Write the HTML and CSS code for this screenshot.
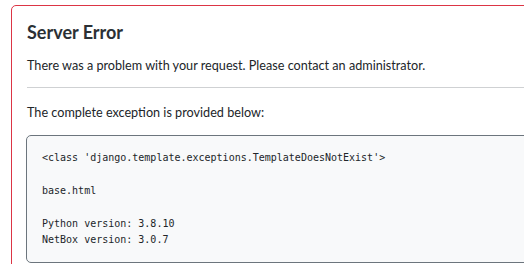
FILE: index.html
```html
<!DOCTYPE html>
<html>
<head>
<meta charset="utf-8">
<title>Server Error</title>
<link rel="stylesheet" href="styles.css">
</head>

<body>
	<div class="card">
		<h1 class="title">Server Error</h1>
		<p class="lead">There was a problem with your request. Please contact an administrator.</p>
		<hr class="rule">
		<p class="lead">The complete exception is provided below:</p>
		<pre class="trace">&lt;class 'django.template.exceptions.TemplateDoesNotExist'&gt;

base.html

Python version: 3.8.10
NetBox version: 3.0.7</pre>
	</div>
</body>
</html>
```

FILE: styles.css
```css
	html {
		overflow: hidden;
	}
	body {
		margin: 5px 0 0 11px;
		font-family: Lato, "Noto Sans", sans-serif;
		color: #212529;
		background: #fff;
	}
	.card {
		width: 600px;
		height: 300px;
		border: 1px solid #dc3545;
		border-radius: 5px;
		padding: 14px 14px 0 14px;
	}
	.title {
		font-size: 18px;
		font-weight: 700;
		line-height: 24px;
		margin: 0 0 11px 1px;
		color: #2b3035;
	}
	.lead {
		font-size: 12.65px;
		line-height: 22px;
		margin: 0 0 0 1px;
	}
	.rule {
		border: 0;
		border-top: 1px solid #cfd1d3;
		margin: 10px 0 14px 1px;
	}
	.trace {
		margin: 11px 0 0 0;
		padding: 14px 15px 14px 15px;
		background-color: #f8f9fa;
		border: 1px solid #6c757d;
		border-radius: 5px;
		font-family: "DejaVu Sans Mono", monospace;
		font-size: 10px;
		line-height: 16.4px;
		color: #212529;
	}
```
